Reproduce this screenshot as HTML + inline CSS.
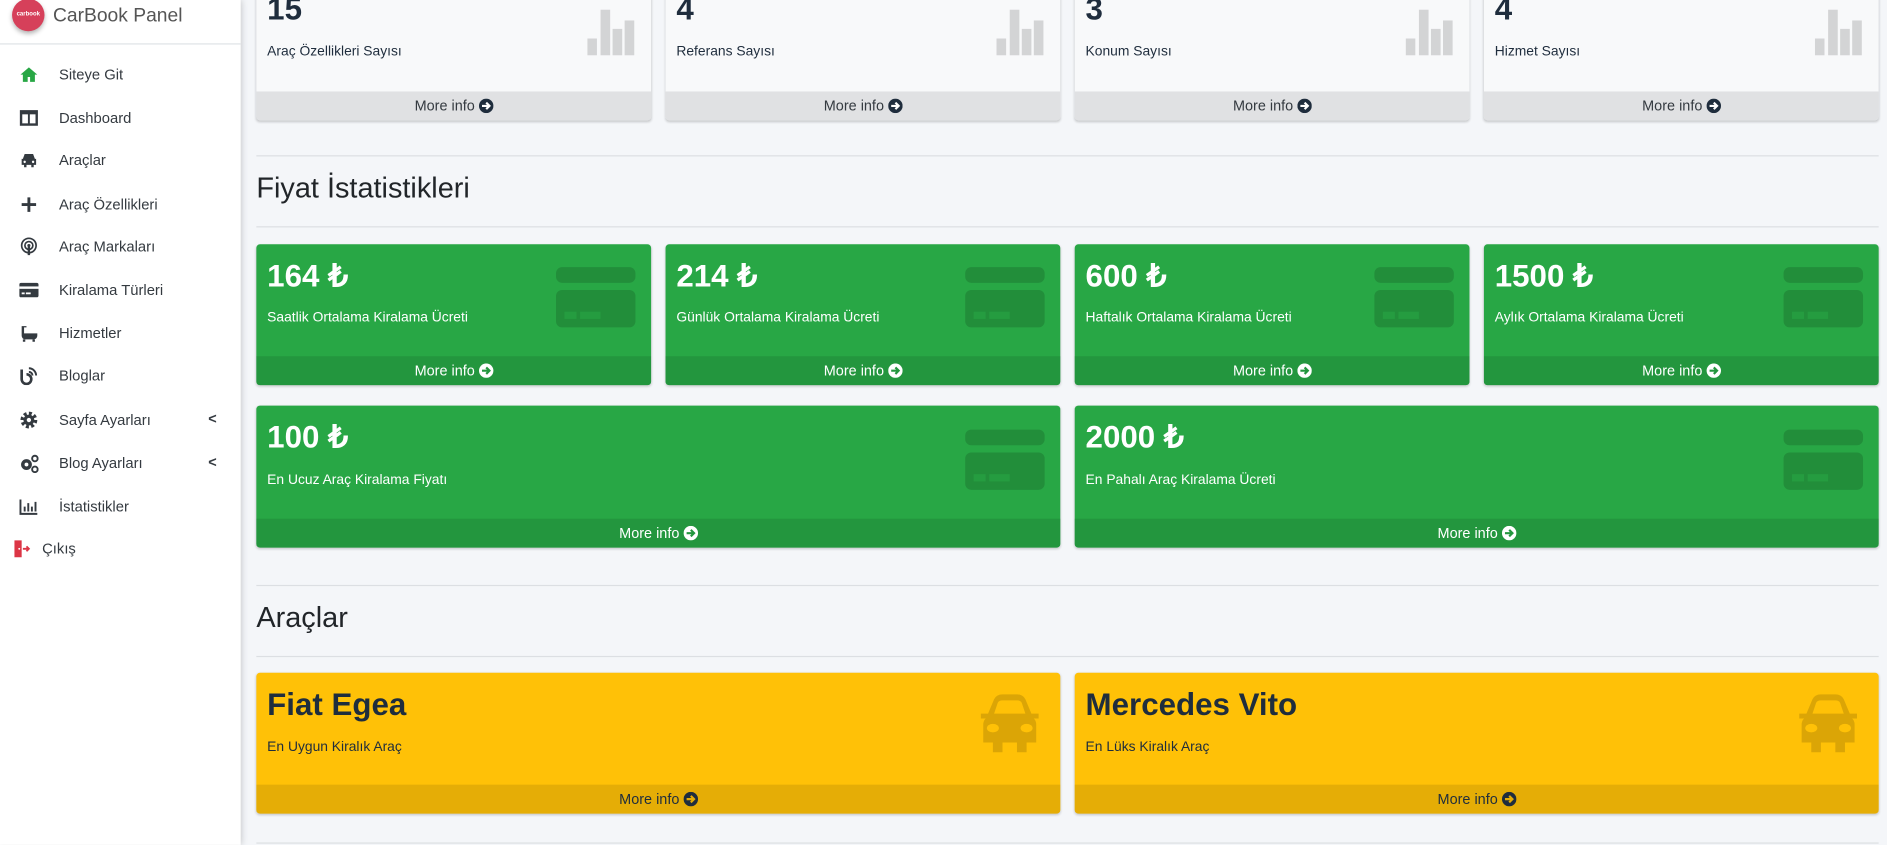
<!DOCTYPE html>
<html><head><meta charset="utf-8">
<style>
*{box-sizing:border-box;margin:0;padding:0}
html,body{width:1887px;height:844px;overflow:hidden;background:#f4f6f9;font-family:"Liberation Sans",sans-serif}
#w{position:absolute;left:0;top:0;width:1568px;height:702px;transform:scale(1.2035);transform-origin:0 0;background:#f4f6f9}
.sb{position:absolute;left:0;top:0;width:200px;height:702px;background:#fff;box-shadow:0 0 6px rgba(0,0,0,.25);z-index:2}
.brand{height:37px;border-bottom:1px solid #dee2e6;position:relative}
.logo{position:absolute;left:10px;top:-1px;width:27px;height:27px;border-radius:50%;background:#d6405a;box-shadow:0 2px 4px rgba(0,0,0,.3);color:#fff;font-size:5px;font-weight:bold;text-align:center;line-height:27px}
.bt{position:absolute;left:44px;top:5px;font-size:16px;font-weight:300;color:#555}
.nav{position:absolute;left:0;width:200px;height:20px}
.nav svg{position:absolute;left:16px;top:2px;width:16px;height:16px}
.nav span{position:absolute;left:49px;top:3px;font-size:12.3px;color:#343a40}
.nav .ch{left:173px;font-size:12px;font-weight:bold;top:2px}
.line{position:absolute;left:213px;width:1348px;height:1px;background:#dcdfe3}
h2{position:absolute;left:213px;font-size:24px;font-weight:300;color:#212529}
.card{position:absolute;border-radius:3px;overflow:hidden;box-shadow:0 1px 2px rgba(0,0,0,.2)}
.num{position:absolute;left:9px;font-size:26px;font-weight:bold}
.lab{position:absolute;left:9px;font-size:11.5px}
.ft{position:absolute;left:0;right:0;bottom:0;height:24px;text-align:center;font-size:12px;line-height:24px}
.ft svg{display:inline-block;width:12px;height:12px;vertical-align:-2px;margin-left:3px}
.gray{background:#f8f9fa}.gray .ft{background:#e0e1e3;color:#343a40}
.gray .num,.gray .lab{color:#1f2d3d}
.green{background:#28a745;color:#fff}.green .ft{background:#23963e}
.yel{background:#ffc107;color:#1f2d3d}.yel .ft{background:#e5ad06}
.cc{position:absolute;width:66px;height:50px}
.cc b{position:absolute;background:rgba(0,0,0,.15);left:0;width:66px;border-radius:5px}
.cc em{position:absolute;background:#28a745;opacity:.55;height:6px;top:37px}
</style></head><body><div id="w">
<svg width="0" height="0" style="position:absolute"><defs>
<symbol id="ad" viewBox="0 0 12 12"><circle cx="6" cy="6" r="6" fill="#1f2d3d"/><path d="M2.5 6h6M6 3.3L8.7 6 6 8.7" stroke="#fff" stroke-width="1.8" fill="none"/></symbol>
<symbol id="ag" viewBox="0 0 12 12"><circle cx="6" cy="6" r="6" fill="#fff"/><path d="M2.5 6h6M6 3.3L8.7 6 6 8.7" stroke="#23963e" stroke-width="1.8" fill="none"/></symbol>
<symbol id="ay" viewBox="0 0 12 12"><circle cx="6" cy="6" r="6" fill="#1f2d3d"/><path d="M2.5 6h6M6 3.3L8.7 6 6 8.7" stroke="#e5ad06" stroke-width="1.8" fill="none"/></symbol>
</defs></svg>
<div class="sb">
<div class="brand"><div class="logo">carbook</div><div class="bt">CarBook Panel</div></div>
<div class="nav" style="top:52px"><svg viewBox="0 0 16 16"><path d="M8 2L1 8h2v6h4v-4h2v4h4V8h2z" fill="#28a745"/></svg><span>Siteye Git</span></div>
<div class="nav" style="top:88px"><svg viewBox="0 0 16 16"><rect x="1.5" y="2.5" width="13" height="11" fill="none" stroke="#343a40" stroke-width="2"/><rect x="1" y="2" width="14" height="3" fill="#343a40"/><path d="M8 4v9" stroke="#343a40" stroke-width="1.6"/></svg><span>Dashboard</span></div>
<div class="nav" style="top:123px"><svg viewBox="0 0 16 16"><path d="M3 7l1.5-4h7L13 7h1v5h-2v2h-2v-2H6v2H4v-2H2V7z" fill="#343a40"/><circle cx="4.5" cy="9.5" r="1" fill="#fff"/><circle cx="11.5" cy="9.5" r="1" fill="#fff"/></svg><span>Araçlar</span></div>
<div class="nav" style="top:160px"><svg viewBox="0 0 16 16"><path d="M8 2v12M2 8h12" stroke="#343a40" stroke-width="2.4"/></svg><span>Araç Özellikleri</span></div>
<div class="nav" style="top:195px"><svg viewBox="0 0 16 16"><circle cx="8" cy="7" r="6" fill="none" stroke="#343a40" stroke-width="1.4"/><circle cx="8" cy="7" r="3.3" fill="none" stroke="#343a40" stroke-width="1.4"/><circle cx="8" cy="7" r="1.3" fill="#343a40"/><path d="M8 8v7" stroke="#343a40" stroke-width="2"/></svg><span>Araç Markaları</span></div>
<div class="nav" style="top:231px"><svg viewBox="0 0 16 16"><rect x="0" y="2" width="16" height="12" rx="1.5" fill="#343a40"/><rect x="0" y="5" width="16" height="2" fill="#fff"/><rect x="2" y="10" width="2.5" height="1.5" fill="#fff"/><rect x="5.5" y="10" width="4" height="1.5" fill="#fff"/></svg><span>Kiralama Türleri</span></div>
<div class="nav" style="top:267px"><svg viewBox="0 0 16 16"><path d="M2 2h4v1H4v5h11v2a3 3 0 0 1-3 3H5a3 3 0 0 1-3-3z" fill="#343a40"/><path d="M4 13v2M12 13v2" stroke="#343a40" stroke-width="2"/></svg><span>Hizmetler</span></div>
<div class="nav" style="top:302px"><svg viewBox="0 0 16 16"><path d="M2 3v8a4 4 0 1 0 4-4" fill="none" stroke="#343a40" stroke-width="2.2"/><path d="M8 2a6 6 0 0 1 6 6M8 5a3 3 0 0 1 3 3" fill="none" stroke="#343a40" stroke-width="1.6"/></svg><span>Bloglar</span></div>
<div class="nav" style="top:339px"><svg viewBox="0 0 16 16"><circle cx="8" cy="8" r="5" fill="none" stroke="#343a40" stroke-width="4" stroke-dasharray="2.2 1.7"/><circle cx="8" cy="8" r="4.5" fill="#343a40"/><circle cx="8" cy="8" r="1.8" fill="#fff"/></svg><span>Sayfa Ayarları</span><span class="ch">&lt;</span></div>
<div class="nav" style="top:375px"><svg viewBox="0 0 16 16"><circle cx="6" cy="9" r="4.5" fill="#343a40"/><circle cx="6" cy="9" r="1.6" fill="#fff"/><circle cx="13" cy="4" r="2.3" fill="none" stroke="#343a40" stroke-width="1.6"/><circle cx="13" cy="13" r="2.3" fill="none" stroke="#343a40" stroke-width="1.6"/></svg><span>Blog Ayarları</span><span class="ch">&lt;</span></div>
<div class="nav" style="top:411px"><svg viewBox="0 0 16 16"><path d="M1 2v12h14" fill="none" stroke="#343a40" stroke-width="1.6"/><path d="M4.5 12V8M7.5 12V5M10.5 12V8M13.5 12V4" stroke="#343a40" stroke-width="1.6"/></svg><span>İstatistikler</span></div>
<div class="nav" style="top:446px"><svg style="left:10px" viewBox="0 0 16 16"><path d="M2 1h6v14H2z" fill="#dc3545"/><path d="M9 8h5M12 6l2 2-2 2" stroke="#dc3545" stroke-width="1.5" fill="none"/><circle cx="6" cy="8" r=".8" fill="#fff"/></svg><span style="left:35px">Çıkış</span></div>
</div>

<div class="card gray" style="left:213px;top:-20px;width:328px;height:120px"><div class="num" style="top:12px">15</div><div class="lab" style="top:57px">Araç Özellikleri Sayısı</div><svg style="position:absolute;left:275px;top:28px" width="40" height="38"><rect x="0" y="24" width="8" height="14" fill="#d3d4d5"/><rect x="11" y="0" width="8" height="38" fill="#d3d4d5"/><rect x="21" y="16" width="8" height="22" fill="#d3d4d5"/><rect x="31" y="9" width="8" height="29" fill="#d3d4d5"/></svg><div class="ft">More info<svg><use href="#ad"/></svg></div></div>
<div class="card gray" style="left:553px;top:-20px;width:328px;height:120px"><div class="num" style="top:12px">4</div><div class="lab" style="top:57px">Referans Sayısı</div><svg style="position:absolute;left:275px;top:28px" width="40" height="38"><rect x="0" y="24" width="8" height="14" fill="#d3d4d5"/><rect x="11" y="0" width="8" height="38" fill="#d3d4d5"/><rect x="21" y="16" width="8" height="22" fill="#d3d4d5"/><rect x="31" y="9" width="8" height="29" fill="#d3d4d5"/></svg><div class="ft">More info<svg><use href="#ad"/></svg></div></div>
<div class="card gray" style="left:893px;top:-20px;width:328px;height:120px"><div class="num" style="top:12px">3</div><div class="lab" style="top:57px">Konum Sayısı</div><svg style="position:absolute;left:275px;top:28px" width="40" height="38"><rect x="0" y="24" width="8" height="14" fill="#d3d4d5"/><rect x="11" y="0" width="8" height="38" fill="#d3d4d5"/><rect x="21" y="16" width="8" height="22" fill="#d3d4d5"/><rect x="31" y="9" width="8" height="29" fill="#d3d4d5"/></svg><div class="ft">More info<svg><use href="#ad"/></svg></div></div>
<div class="card gray" style="left:1233px;top:-20px;width:328px;height:120px"><div class="num" style="top:12px">4</div><div class="lab" style="top:57px">Hizmet Sayısı</div><svg style="position:absolute;left:275px;top:28px" width="40" height="38"><rect x="0" y="24" width="8" height="14" fill="#d3d4d5"/><rect x="11" y="0" width="8" height="38" fill="#d3d4d5"/><rect x="21" y="16" width="8" height="22" fill="#d3d4d5"/><rect x="31" y="9" width="8" height="29" fill="#d3d4d5"/></svg><div class="ft">More info<svg><use href="#ad"/></svg></div></div>

<div class="line" style="top:129px"></div>
<h2 style="top:143px">Fiyat İstatistikleri</h2>
<div class="line" style="top:188px"></div>

<div class="card green" style="left:213px;top:203px;width:328px;height:117px"><div class="num" style="top:11px">164 ₺</div><div class="lab" style="top:55px">Saatlik Ortalama Kiralama Ücreti</div><div class="cc" style="left:249px;top:19px"><b style="top:0;height:13px"></b><b style="top:19px;height:31px"></b><em style="left:7px;width:10px"></em><em style="left:20px;width:17px"></em></div><div class="ft">More info<svg><use href="#ag"/></svg></div></div>
<div class="card green" style="left:553px;top:203px;width:328px;height:117px"><div class="num" style="top:11px">214 ₺</div><div class="lab" style="top:55px">Günlük Ortalama Kiralama Ücreti</div><div class="cc" style="left:249px;top:19px"><b style="top:0;height:13px"></b><b style="top:19px;height:31px"></b><em style="left:7px;width:10px"></em><em style="left:20px;width:17px"></em></div><div class="ft">More info<svg><use href="#ag"/></svg></div></div>
<div class="card green" style="left:893px;top:203px;width:328px;height:117px"><div class="num" style="top:11px">600 ₺</div><div class="lab" style="top:55px">Haftalık Ortalama Kiralama Ücreti</div><div class="cc" style="left:249px;top:19px"><b style="top:0;height:13px"></b><b style="top:19px;height:31px"></b><em style="left:7px;width:10px"></em><em style="left:20px;width:17px"></em></div><div class="ft">More info<svg><use href="#ag"/></svg></div></div>
<div class="card green" style="left:1233px;top:203px;width:328px;height:117px"><div class="num" style="top:11px">1500 ₺</div><div class="lab" style="top:55px">Aylık Ortalama Kiralama Ücreti</div><div class="cc" style="left:249px;top:19px"><b style="top:0;height:13px"></b><b style="top:19px;height:31px"></b><em style="left:7px;width:10px"></em><em style="left:20px;width:17px"></em></div><div class="ft">More info<svg><use href="#ag"/></svg></div></div>
<div class="card green" style="left:213px;top:337px;width:668px;height:118px"><div class="num" style="top:11px">100 ₺</div><div class="lab" style="top:56px">En Ucuz Araç Kiralama Fiyatı</div><div class="cc" style="left:589px;top:20px"><b style="top:0;height:13px"></b><b style="top:19px;height:31px"></b><em style="left:7px;width:10px"></em><em style="left:20px;width:17px"></em></div><div class="ft">More info<svg><use href="#ag"/></svg></div></div>
<div class="card green" style="left:893px;top:337px;width:668px;height:118px"><div class="num" style="top:11px">2000 ₺</div><div class="lab" style="top:56px">En Pahalı Araç Kiralama Ücreti</div><div class="cc" style="left:589px;top:20px"><b style="top:0;height:13px"></b><b style="top:19px;height:31px"></b><em style="left:7px;width:10px"></em><em style="left:20px;width:17px"></em></div><div class="ft">More info<svg><use href="#ag"/></svg></div></div>

<div class="line" style="top:486px"></div>
<h2 style="top:500px">Araçlar</h2>
<div class="line" style="top:545px"></div>

<div class="card yel" style="left:213px;top:559px;width:668px;height:117px"><div class="num" style="top:11px">Fiat Egea</div><div class="lab" style="top:56px">En Uygun Kiralık Araç</div><svg style="position:absolute;left:596px;top:16px" width="60" height="52" viewBox="0 0 60 52"><path d="M12 18l5-12Q19 2 24 2h12q5 0 7 4l5 12h6v4h-4q2 2 2 5v15H44v8h-8v-8H24v8h-8v-8H8V27q0-3 2-5H6v-4z" fill="rgba(0,0,0,.14)"/><path d="M17 18l3-9q1-2 4-2h12q3 0 4 2l3 9z" fill="#ffc107"/><ellipse cx="16" cy="30" rx="5" ry="3.5" fill="#ffc107"/><ellipse cx="44" cy="30" rx="5" ry="3.5" fill="#ffc107"/></svg><div class="ft">More info<svg><use href="#ay"/></svg></div></div>
<div class="card yel" style="left:893px;top:559px;width:668px;height:117px"><div class="num" style="top:11px">Mercedes Vito</div><div class="lab" style="top:56px">En Lüks Kiralık Araç</div><svg style="position:absolute;left:596px;top:16px" width="60" height="52" viewBox="0 0 60 52"><path d="M12 18l5-12Q19 2 24 2h12q5 0 7 4l5 12h6v4h-4q2 2 2 5v15H44v8h-8v-8H24v8h-8v-8H8V27q0-3 2-5H6v-4z" fill="rgba(0,0,0,.14)"/><path d="M17 18l3-9q1-2 4-2h12q3 0 4 2l3 9z" fill="#ffc107"/><ellipse cx="16" cy="30" rx="5" ry="3.5" fill="#ffc107"/><ellipse cx="44" cy="30" rx="5" ry="3.5" fill="#ffc107"/></svg><div class="ft">More info<svg><use href="#ay"/></svg></div></div>
<div class="line" style="top:700px"></div>
</div></body></html>
